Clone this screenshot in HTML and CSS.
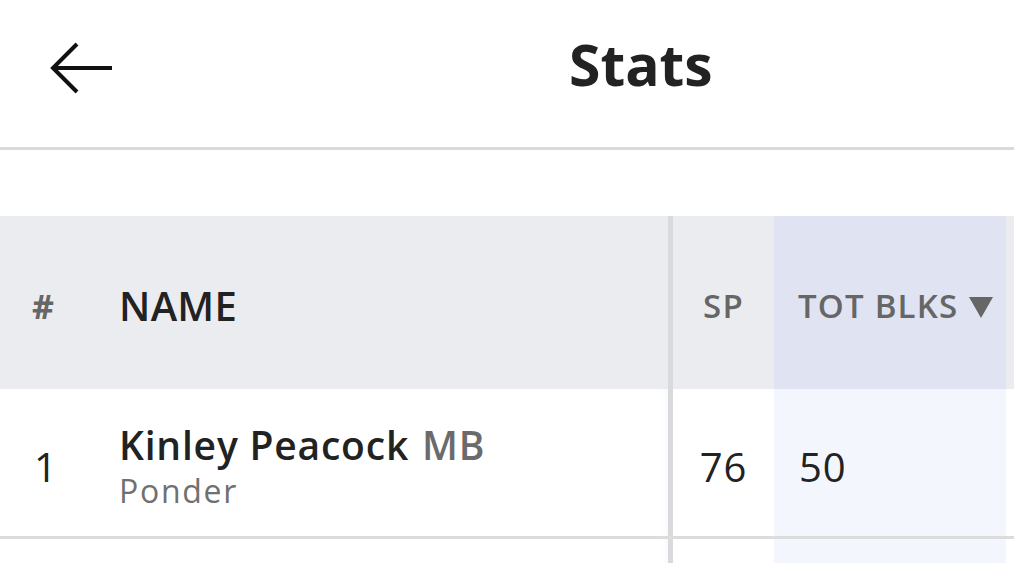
FILE: index.html
```html
<!DOCTYPE html>
<html lang="en">
<head>
<meta charset="utf-8">
<title>Stats</title>
<link rel="stylesheet" href="styles.css">
</head>
<body>
<header class="topbar">
  <button class="back" aria-label="Back">
    <svg width="64" height="54" viewBox="0 0 64 54" aria-hidden="true">
      <path d="M3 26 L62 26 M27 2 L3 26 L27 50" fill="none" stroke="#111" stroke-width="4" stroke-linejoin="miter"/>
    </svg>
  </button>
  <h1 class="title">Stats</h1>
</header>
<div class="spacer"></div>
<div class="table">
  <div class="row head">
    <div class="cell c-rank">#</div>
    <div class="cell c-name">NAME</div>
    <div class="cell c-div"></div>
    <div class="cell c-sp">SP</div>
    <div class="cell c-sort">TOT BLKS<svg class="arrow" width="26" height="22" viewBox="0 0 26 22" aria-hidden="true"><path d="M1 1 L25 1 L13 22 Z" fill="#666"/></svg></div>
    <div class="cell c-rest"></div>
  </div>
  <div class="row data">
    <div class="cell c-rank">1</div>
    <div class="cell c-name">
      <div class="player"><span class="pname">Kinley Peacock</span> <span class="pos">MB</span></div>
      <div class="team">Ponder</div>
    </div>
    <div class="cell c-div"></div>
    <div class="cell c-sp">76</div>
    <div class="cell c-sort">50</div>
    <div class="cell c-rest"></div>
  </div>
  <div class="row data last">
    <div class="cell c-rank"></div>
    <div class="cell c-name"></div>
    <div class="cell c-div"></div>
    <div class="cell c-sp"></div>
    <div class="cell c-sort"></div>
    <div class="cell c-rest"></div>
  </div>
</div>
</body>
</html>
```

FILE: styles.css
```css
* { box-sizing: border-box; }
html, body { margin: 0; padding: 0; }
body {
  background: #fff;
  font-family: "Open Sans", "Noto Sans", sans-serif;
  color: #222;
  overflow: hidden;
  width: 1014px;
  height: 563px;
}
.topbar {
  height: 150px;
  border-bottom: 3px solid #dadada;
  display: flex;
  align-items: center;
  padding-left: 50px;
  padding-bottom: 14px;
}
.back {
  border: 0;
  background: none;
  padding: 0;
  width: 64px;
  height: 54px;
  display: block;
  margin-top: 4px;
}
.back svg { display: block; }
.title {
  margin: 0 0 4px 455px;
  font-size: 57px;
  font-weight: 700;
  color: #222;
  letter-spacing: 0;
  line-height: 1;
}
.spacer { height: 66px; }
.row {
  display: grid;
  grid-template-columns: 95px 573px 5px 101px 232px 1fr;
}
.cell {
  display: flex;
  align-items: center;
}
.c-div { background: #d9dadd; }
.head { height: 173px; background: #ebecf0; }
.head .cell { padding-top: 6px; }
.head .c-div { padding-top: 0; }
.head .c-rank {
  padding-left: 32px;
  font-size: 34px;
  font-weight: 700;
  color: #666;
}
.head .c-name {
  padding-left: 24px;
  font-size: 40px;
  font-weight: 600;
  color: #222;
  letter-spacing: 0.3px;
}
.head .c-sp {
  justify-content: center;
  font-size: 33px;
  font-weight: 600;
  color: #666;
  letter-spacing: 1.4px;
}
.head .c-sort {
  background: #dfe3f2;
  padding-left: 24px;
  font-size: 33px;
  font-weight: 600;
  color: #666;
  white-space: nowrap;
  letter-spacing: 1.2px;
}
.arrow { display: block; margin-left: 10px; margin-top: 2px; }
.data {
  height: 150px;
  background: #fff;
  border-bottom: 3px solid #dcdcdc;
}
.data .c-name { box-shadow: inset -8px 0 8px -8px rgba(0,0,0,0.05); }
.data .c-rank {
  padding-left: 34px;
  font-size: 40px;
  font-weight: 400;
  color: #222;
  padding-top: 8px;
}
.data .c-name {
  padding-left: 24px;
  flex-direction: column;
  align-items: flex-start;
  justify-content: center;
  padding-top: 10px;
}
.player { font-size: 39px; font-weight: 600; line-height: 46px; white-space: nowrap; letter-spacing: 0.8px; }
.pname { color: #222; }
.pos { color: #6b6b6b; margin-left: 2px; }
.team { font-size: 32px; color: #707070; line-height: 45px; letter-spacing: 1.7px; }
.data .c-sp {
  justify-content: center;
  font-size: 40px;
  color: #222;
  padding-top: 8px;
  letter-spacing: 1px;
}
.data .c-sort {
  background: #f4f6fd;
  padding-left: 25px;
  font-size: 40px;
  color: #222;
  padding-top: 8px;
  letter-spacing: 1px;
}
.last { border-bottom: 0; height: 60px; }
```
